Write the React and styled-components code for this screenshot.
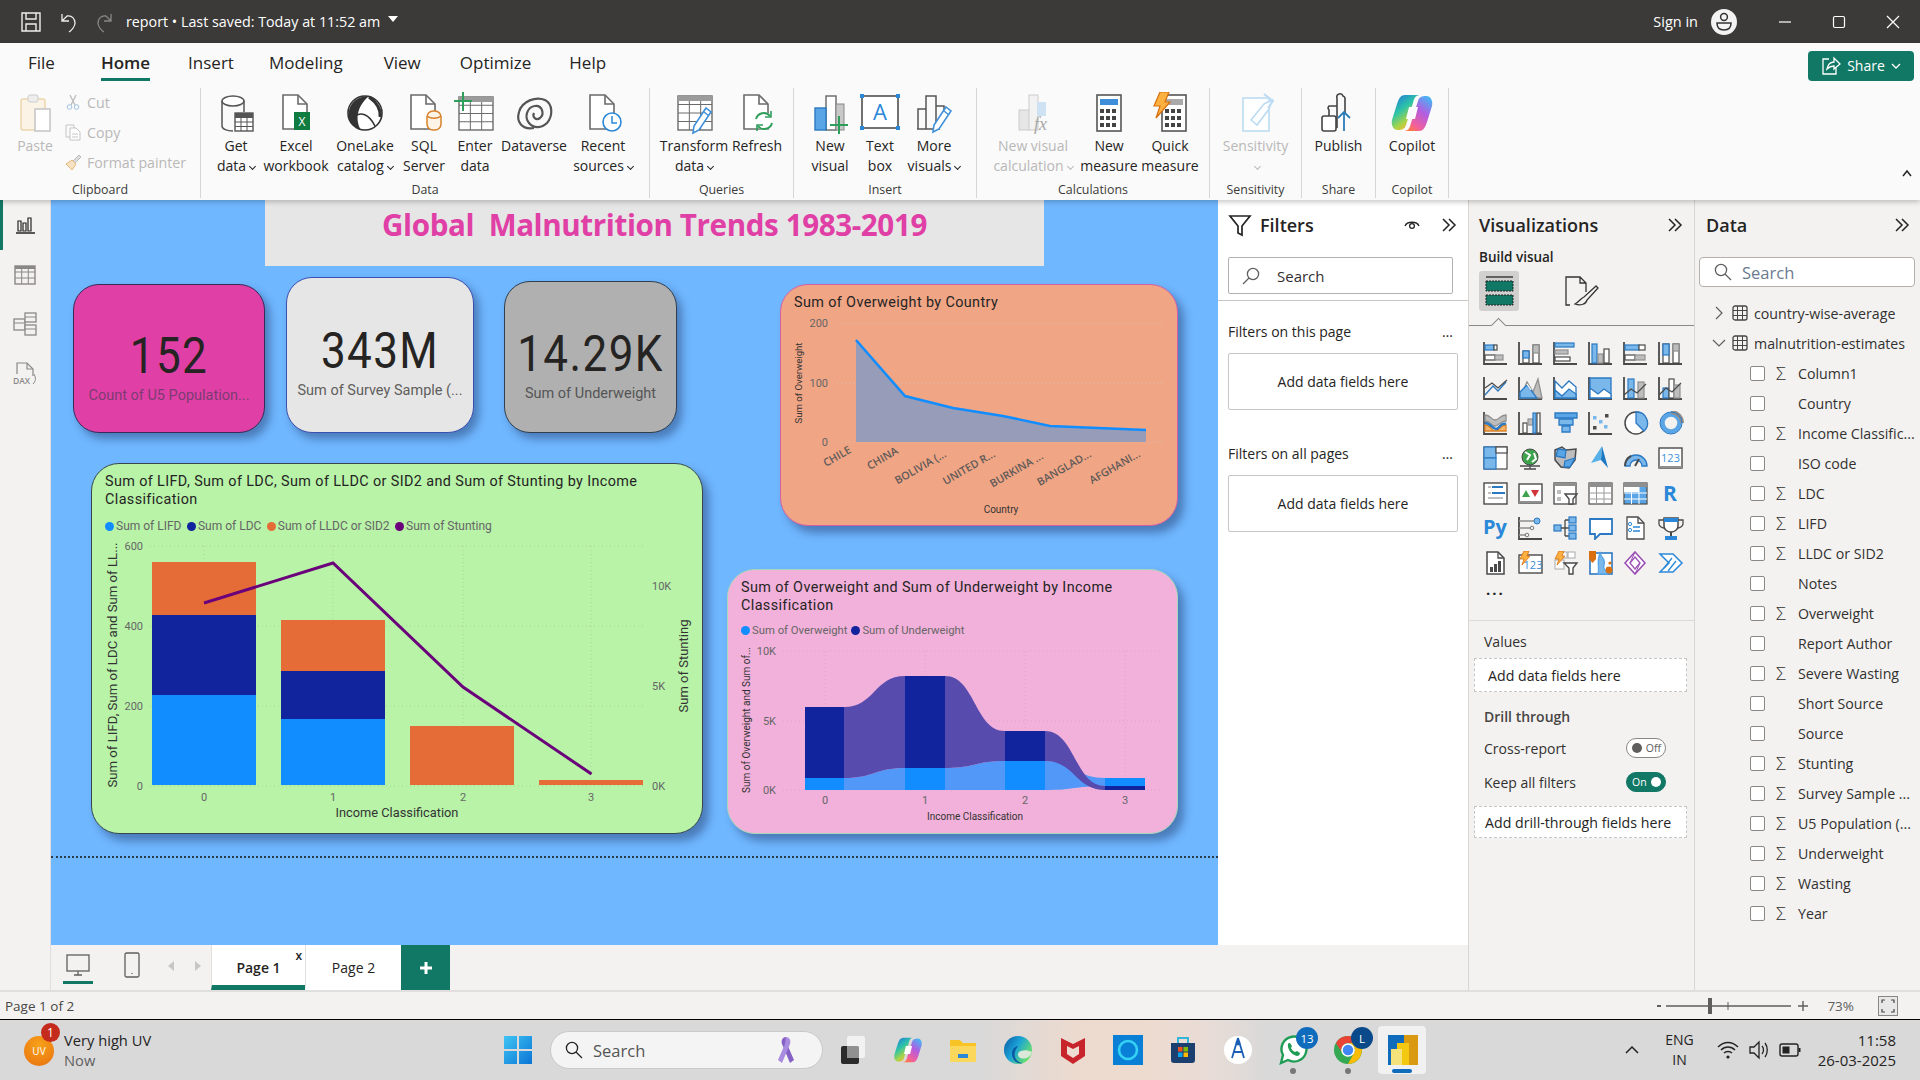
import React from "react";
import styled, { createGlobalStyle } from "styled-components";

const ui = `"Open Sans", "Liberation Sans", sans-serif`;
const din = `Roboto, "Liberation Sans", sans-serif`;
const teal = "#117865";
const panel = "#f3f2f1";

const Global = createGlobalStyle`
  html, body { margin: 0; padding: 0; background: ${panel}; }
  body { font-family: ${ui}; color: #252423; overflow: hidden; }
  * { box-sizing: border-box; }
  svg { display: block; flex-shrink: 0; }
`;

const Page = styled.div`
  width: 1920px;
  height: 1080px;
  display: flex;
  flex-direction: column;
  overflow: hidden;
`;

/* title bar */
const TitleBar = styled.div`
  height: 43px;
  background: #3b3a39;
  color: #fff;
  display: flex;
  align-items: center;
  padding-left: 19px;
  font-size: 14.3px;
`;
const TitleIcon = styled.div`
  width: 37px;
  display: flex;
  justify-content: flex-start;
  padding-left: 1px;
`;
const DocName = styled.span`
  margin-left: -4px;
  white-space: nowrap;
`;
const Caret = styled.span`
  margin-left: 8px;
  width: 0;
  height: 0;
  border-left: 5px solid transparent;
  border-right: 5px solid transparent;
  border-top: 6px solid #fff;
  margin-top: -5px;
`;
const SignIn = styled.span`
  margin-left: auto;
  font-size: 14.5px;
  margin-right: 13px;
`;
const WinButton = styled.div`
  width: 54px;
  display: flex;
  justify-content: center;
  margin-left: ${(p) => p.$ml || 0}px;
`;

/* ribbon */
const Ribbon = styled.div`
  height: 157px;
  background: #fafafa;
  box-shadow: 0 2px 5px rgba(0, 0, 0, 0.22);
  position: relative;
  z-index: 3;
`;
const TabRow = styled.div`
  height: 45px;
  display: flex;
  align-items: center;
  padding-left: 28px;
  padding-right: 6px;
  gap: 38px;
`;
const Tab = styled.div`
  font-size: 17px;
  height: 45px;
  line-height: 40px;
  position: relative;
  font-weight: ${(p) => (p.$active ? 600 : 400)};
  margin-right: ${(p) => p.$mr || 0}px;
  ${(p) =>
    p.$active &&
    `&::after { content: ""; position: absolute; left: 0; right: 0; bottom: 7px; height: 3px; background: ${teal}; }`}
`;
const ShareButton = styled.div`
  margin-left: auto;
  width: 106px;
  height: 30px;
  background: ${teal};
  color: #fff;
  border-radius: 4px;
  display: flex;
  align-items: center;
  justify-content: center;
  gap: 6px;
  font-size: 14px;
`;
const Groups = styled.div`
  display: flex;
  height: 112px;
`;
const Group = styled.div`
  width: ${(p) => p.$w}px;
  height: 110px;
  border-right: 1px solid #d6d6d6;
  display: flex;
  flex-direction: column;
`;
const Items = styled.div`
  height: 93px;
  display: flex;
  justify-content: ${(p) => (p.$center ? "center" : "flex-start")};
  padding-left: ${(p) => p.$pl || 0}px;
`;
const GroupLabel = styled.div`
  margin-top: 3px;
  font-size: 12.4px;
  text-align: center;
  line-height: 16px;
  color: #3b3a39;
`;
const Item = styled.div`
  width: ${(p) => p.$w}px;
  flex-shrink: 0;
  padding-top: 4px;
  display: flex;
  flex-direction: column;
  align-items: center;
  color: ${(p) => (p.$off ? "#b9b8b7" : "#252423")};
`;
const ItemLabel = styled.div`
  font-size: 14px;
  line-height: 20px;
  text-align: center;
  white-space: nowrap;
`;
const Chevron = styled.span`
  display: inline-block;
  width: 5px;
  height: 5px;
  margin-left: 4px;
  border-right: 1.3px solid currentColor;
  border-bottom: 1.3px solid currentColor;
  transform: translateY(-2px) rotate(45deg);
`;
const SmallStack = styled.div`
  display: flex;
  flex-direction: column;
  margin: -1px 0 0 7px;
  color: #b9b8b7;
  font-size: 14.2px;
`;
const SmallRow = styled.div`
  height: 30px;
  display: flex;
  align-items: center;
  gap: 5px;
  white-space: nowrap;
`;
const Collapse = styled.div`
  margin: 80px 0 0 auto;
  padding-right: 7px;
`;

/* body */
const Main = styled.div`
  height: 790px;
  display: flex;
`;
const Rail = styled.div`
  width: 51px;
  background: ${panel};
  border-right: 1px solid #e1dfdd;
  display: flex;
  flex-direction: column;
  align-items: center;
  padding-top: 11px;
  gap: 21.5px;
  position: relative;
`;
const RailMark = styled.div`
  position: absolute;
  left: 0;
  top: 0;
  width: 3px;
  height: 50px;
  background: ${teal};
`;
const Center = styled.div`
  width: 1417px;
  display: flex;
  flex-direction: column;
`;
const CanvasRow = styled.div`
  height: 745px;
  display: flex;
`;
const Canvas = styled.div`
  width: 1167px;
  background: #6fb7ff;
  position: relative;
  overflow: hidden;
`;
const TitleBox = styled.div`
  position: absolute;
  left: 214px;
  top: 0;
  width: 779px;
  height: 66px;
  background: #e6e6e6;
  color: #e040a5;
  font-size: 29.6px;
  font-weight: 700;
  text-align: center;
  line-height: 50px;
  font-family: ${ui};
  letter-spacing: -0.4px;
`;
const Kpi = styled.div`
  position: absolute;
  left: ${(p) => p.$x}px;
  top: ${(p) => p.$y}px;
  width: ${(p) => p.$w}px;
  height: ${(p) => p.$h}px;
  background: ${(p) => p.$bg};
  border: 1px solid ${(p) => p.$line};
  border-radius: 26px;
  box-shadow: 5px 6px 8px rgba(30, 50, 100, 0.45);
  padding-top: ${(p) => p.$top}px;
  text-align: center;
  font-family: ${din};
`;
const KpiValue = styled.div`
  font-size: 50px;
  line-height: 50px;
  color: #252423;
  letter-spacing: 1.6px;
  transform: scaleX(0.88);
`;
const KpiLabel = styled.div`
  margin-top: 5px;
  font-size: 14.5px;
  line-height: 20px;
  color: ${(p) => p.$c};
`;
const Visual = styled.div`
  position: absolute;
  left: ${(p) => p.$x}px;
  top: ${(p) => p.$y}px;
  width: ${(p) => p.$w}px;
  height: ${(p) => p.$h}px;
  background: ${(p) => p.$bg};
  border: 1px solid ${(p) => p.$line};
  border-radius: 28px;
  box-shadow: 6px 7px 9px rgba(30, 50, 100, 0.45);
  font-family: ${din};
`;
const Head = styled.div`
  height: ${(p) => p.$h}px;
  padding: 9px 10px 0 ${(p) => p.$pl}px;
`;
const VisualTitle = styled.div`
  font-size: 14.4px;
  line-height: 17.5px;
  color: #252423;
  letter-spacing: 0.38px;
`;
const Legend = styled.div`
  display: flex;
  align-items: center;
  margin-top: ${(p) => p.$mt}px;
  gap: ${(p) => p.$gap}px;
  height: 16px;
  font-size: ${(p) => p.$s}px;
  color: #666;
`;
const LegendItem = styled.div`
  display: flex;
  align-items: center;
  gap: 2px;
  white-space: nowrap;
  &::before {
    content: "";
    width: 9px;
    height: 9px;
    border-radius: 50%;
    background: ${(p) => p.$c};
  }
`;
const Dotted = styled.div`
  position: absolute;
  left: 0;
  right: 0;
  top: 656px;
  border-top: 2px dotted #2a3a4a;
`;
const ChartText = styled.text`
  font-family: ${(p) => (p.$ui ? ui : din)};
  font-size: ${(p) => p.$s || 11}px;
  fill: ${(p) => p.$c || "#666"};
  font-weight: ${(p) => p.$b || 400};
`;

/* filters */
const Filters = styled.div`
  width: 250px;
  background: #fff;
  padding: 13px 10px 0;
  position: relative;
`;
const PanelHead = styled.div`
  height: 24px;
  display: flex;
  align-items: center;
  font-size: 18px;
  font-weight: 600;
  line-height: 24px;
`;
const VizHead = styled(PanelHead)`
  justify-content: space-between;
`;
const FiltersHeadIcon = styled.div`
  margin-left: ${(p) => p.$ml || 0}px;
`;
const SearchBox = styled.div`
  height: ${(p) => p.$h}px;
  width: ${(p) => p.$w}px;
  margin-top: ${(p) => p.$mt}px;
  background: #fff;
  border: 1px solid #b3b0ad;
  border-radius: ${(p) => p.$r || 2}px;
  display: flex;
  align-items: center;
  gap: ${(p) => p.$gap}px;
  padding-left: ${(p) => p.$pl}px;
  font-size: ${(p) => p.$s || 15}px;
  color: ${(p) => p.$c || "#323130"};
`;
const FilterRule = styled.div`
  height: 1px;
  background: #c8c6c4;
  margin: 6px -10px 0;
`;
const FilterTitle = styled.div`
  margin-top: ${(p) => p.$mt}px;
  height: 20px;
  font-size: 14px;
  line-height: 20px;
  display: flex;
  justify-content: space-between;
  padding-right: 5px;
`;
const DropBox = styled.div`
  margin-top: 11px;
  height: 57px;
  border: 1px solid #c8c6c4;
  border-radius: 2px;
  display: flex;
  align-items: center;
  justify-content: center;
  font-size: 14px;
`;

/* page bar */
const PageBar = styled.div`
  height: 45px;
  background: ${panel};
  display: flex;
  align-items: stretch;
  padding-left: 12px;
`;
const ViewIcon = styled.div`
  width: ${(p) => p.$w}px;
  margin-left: ${(p) => p.$ml || 0}px;
  display: flex;
  justify-content: center;
  padding-top: 7px;
  position: relative;
  ${(p) =>
    p.$active &&
    `&::after { content: ""; position: absolute; left: 0; right: 0; bottom: 6px; height: 3px; background: ${teal}; }`}
`;
const NavArrow = styled.div`
  width: 27px;
  display: flex;
  justify-content: center;
  align-items: center;
  padding-bottom: 4px;
`;
const PageTab = styled.div`
  width: ${(p) => p.$w}px;
  background: #fff;
  border-bottom: 5px solid ${(p) => (p.$active ? teal : "#fff")};
  border-left: 1px solid #e1dfdd;
  display: flex;
  align-items: center;
  justify-content: center;
  font-size: 14px;
  font-weight: ${(p) => (p.$active ? 600 : 400)};
  position: relative;
  padding-top: 4px;
`;
const CloseX = styled.span`
  position: absolute;
  right: 3px;
  top: 2px;
  font-size: 12px;
  font-weight: 600;
`;
const AddTab = styled.div`
  width: 49px;
  background: ${teal};
  display: flex;
  align-items: center;
  justify-content: center;
`;

/* visualizations */
const Viz = styled.div`
  width: 226px;
  background: ${panel};
  border-left: 1px solid #d8d6d4;
  padding-top: 13px;
`;
const VizPad = styled.div`
  padding: 0 10px;
`;
const BuildLabel = styled.div`
  margin-top: 10px;
  font-size: 13.5px;
  font-weight: 600;
  line-height: 20px;
`;
const BuildTabs = styled.div`
  margin: 4px -10px 0;
  height: 55px;
  border-bottom: 1px solid #8a8886;
  position: relative;
  display: flex;
  gap: 43px;
  padding-left: 10px;
`;
const Notch = styled.div`
  position: absolute;
  left: 24px;
  bottom: -6px;
  width: 11px;
  height: 11px;
  background: ${panel};
  border-left: 1px solid #8a8886;
  border-top: 1px solid #8a8886;
  transform: rotate(45deg);
`;
const BuildTab = styled.div`
  width: 40px;
  height: 40px;
  border-radius: 3px;
  background: ${(p) => (p.$active ? "#d2d0ce" : "transparent")};
  display: flex;
  align-items: center;
  justify-content: center;
`;
const Gallery = styled.div`
  margin-top: 9px;
  padding-left: 9px;
  display: grid;
  grid-template-columns: repeat(6, 35px);
  grid-auto-rows: 35px;
  place-items: center;
`;
const More = styled.div`
  padding-left: 17px;
  font-size: 15px;
  font-weight: 700;
  letter-spacing: 2px;
  line-height: 20px;
  margin-top: -1px;
`;
const VizRule = styled.div`
  height: 1px;
  background: #dcdad8;
  margin-top: 21px;
`;
const WellLabel = styled.div`
  margin: ${(p) => p.$mt}px 0 0 15px;
  font-size: 14px;
  line-height: 20px;
  font-weight: ${(p) => p.$b || 400};
  color: ${(p) => (p.$b ? "#484644" : "#323130")};
`;
const Well = styled.div`
  margin: ${(p) => p.$mt}px 0 0 5px;
  width: 213px;
  height: ${(p) => p.$h}px;
  background: #fff;
  border: 1px dashed #c8c6c4;
  display: flex;
  align-items: center;
  padding-left: ${(p) => p.$pl}px;
  font-size: 14.2px;
  white-space: nowrap;
`;
const ToggleRow = styled.div`
  margin-top: ${(p) => p.$mt}px;
  padding: 0 28px 0 15px;
  height: 20px;
  display: flex;
  justify-content: space-between;
  align-items: center;
  font-size: 14px;
  color: #323130;
`;
const Toggle = styled.div`
  width: 40px;
  height: 20px;
  border-radius: 10px;
  border: 1px solid ${(p) => (p.$on ? teal : "#8a8886")};
  background: ${(p) => (p.$on ? teal : "#fff")};
  color: ${(p) => (p.$on ? "#fff" : "#605e5c")};
  display: flex;
  align-items: center;
  justify-content: space-between;
  flex-direction: ${(p) => (p.$on ? "row-reverse" : "row")};
  padding: 0 4px 0 5px;
  font-size: 10.5px;
  &::before {
    content: "";
    width: 10px;
    height: 10px;
    border-radius: 50%;
    background: ${(p) => (p.$on ? "#fff" : "#605e5c")};
  }
`;

/* data */
const DataPanel = styled.div`
  width: 226px;
  background: ${panel};
  border-left: 1px solid #d8d6d4;
  padding-top: 13px;
`;
const DataHead = styled(PanelHead)`
  padding: 0 9px 0 11px;
  justify-content: space-between;
`;
const DataSearch = styled.div`
  padding-left: 4px;
`;
const Tree = styled.div`
  margin-top: 11px;
`;
const TableRow = styled.div`
  height: 30px;
  display: flex;
  align-items: center;
  padding-left: 17px;
  font-size: 14.2px;
  color: #323130;
  gap: 6px;
`;
const FieldRow = styled.div`
  height: 30px;
  display: flex;
  align-items: center;
  padding-left: 55px;
  font-size: 14.2px;
  color: #323130;
  white-space: nowrap;
`;
const Check = styled.div`
  width: 15px;
  height: 15px;
  background: #fff;
  border: 1px solid #8a8886;
  border-radius: 2px;
  margin-right: 11px;
`;
const Sigma = styled.span`
  width: 22px;
  font-size: 18px;
  line-height: 16px;
  font-weight: 300;
  text-align: left;
`;

/* status */
const StatusBar = styled.div`
  height: 29px;
  background: ${panel};
  border-top: 2px solid #e1dfdd;
  border-bottom: 0;
  display: flex;
  align-items: center;
  padding-left: 5px;
  font-size: 13.5px;
  color: #484644;
`;
const ZoomBar = styled.div`
  margin-left: auto;
  display: flex;
  align-items: center;
  padding-right: 22px;
`;
const ZoomPct = styled.span`
  margin: 0 24px 0 18px;
  color: #605e5c;
`;

/* taskbar */
const Taskbar = styled.div`
  height: 61px;
  border-top: 1px solid #000;
  background: linear-gradient(90deg, #d9d9d9 0, #d9d9d9 51%, #ecdacf 56%, #eddbd0 60%, #e8dcd6 63%, #d9d9d9 66%);
  display: flex;
  align-items: center;
  position: relative;
`;
const Weather = styled.div`
  width: 503px;
  height: 60px;
  display: flex;
  align-items: center;
  padding-left: 24px;
  gap: 10px;
  flex-shrink: 0;
`;
const WeatherIcon = styled.div`
  width: 30px;
  height: 30px;
  border-radius: 50%;
  background: radial-gradient(circle at 50% 30%, #f7a11a, #e8710f);
  color: #fff;
  font-size: 10px;
  display: flex;
  align-items: center;
  justify-content: center;
  position: relative;
  margin-top: 2px;
`;
const RedBadge = styled.div`
  position: absolute;
  right: -6px;
  top: -13px;
  width: 19px;
  height: 19px;
  border-radius: 50%;
  background: #c42b1c;
  color: #fff;
  font-size: 12px;
  display: flex;
  align-items: center;
  justify-content: center;
`;
const WeatherText = styled.div`
  font-size: 14.7px;
  line-height: 20px;
`;
const Muted = styled.div`
  color: #5f5f5f;
`;
const TaskSearch = styled.div`
  margin-left: 17px;
  width: 273px;
  height: 38px;
  border-radius: 19px;
  background: #f4f4f4;
  border: 1px solid #c9c9c9;
  display: flex;
  align-items: center;
  padding: 0 27px 0 14px;
  gap: 10px;
  font-size: 16.5px;
  color: #555;
  flex-shrink: 0;
`;
const SearchRibbon = styled.span`
  margin-left: auto;
`;
const Slot = styled.div`
  width: 55px;
  height: 48px;
  display: flex;
  align-items: center;
  justify-content: center;
  position: relative;
  flex-shrink: 0;
  margin-left: ${(p) => p.$ml || 0}px;
  ${(p) =>
    p.$run &&
    `&::after { content: ""; position: absolute; left: 25px; bottom: 0; width: 6px; height: 6px; border-radius: 50%; background: #777; }`}
  ${(p) =>
    p.$sel &&
    `&::before { content: ""; position: absolute; left: 3px; right: 4px; top: 0; bottom: 0; background: #f1f1f1; border-radius: 4px; }
     &::after { content: ""; position: absolute; left: 17px; bottom: 1px; width: 20px; height: 4px; border-radius: 2px; background: #0f6cbd; }`}
  & > svg { position: relative; z-index: 1; }
`;
const CountBadge = styled.div`
  position: absolute;
  right: ${(p) => p.$r}px;
  top: ${(p) => p.$t}px;
  width: 22px;
  height: 22px;
  border-radius: 50%;
  background: ${(p) => p.$bg};
  color: #fff;
  font-size: 11.5px;
  display: flex;
  align-items: center;
  justify-content: center;
  z-index: 2;
`;
const Tray = styled.div`
  margin-left: auto;
  display: flex;
  align-items: center;
  padding-right: 24px;
`;
const TrayText = styled.div`
  font-size: ${(p) => p.$s || 14}px;
  line-height: 20px;
  text-align: ${(p) => p.$align};
  white-space: nowrap;
  margin: 0 ${(p) => p.$mr || 0}px 0 ${(p) => p.$ml || 0}px;
`;
const TrayIcon = styled.div`
  width: 31px;
  display: flex;
  justify-content: center;
  margin-left: ${(p) => p.$ml || 0}px;
`;

/* ---------- icons ---------- */
const Ico = ({ s = 44, w, h, children }) => (
  <svg width={w || s} height={h || s} viewBox={`0 0 ${w || s} ${h || s}`} fill="none">
    {children}
  </svg>
);

const Doc = ({ c = "#6b6b6b" }) => (
  <>
    <path d="M9 3H24L33 12V37H9Z" fill="#fff" stroke={c} strokeWidth="1.6" />
    <path d="M24 3V12H33" stroke={c} strokeWidth="1.6" />
  </>
);
const Cells = ({ x, y, w, h, c = "#6b6b6b" }) => {
  const lines = [];
  for (let i = 1; i < 3; i++) lines.push(<path key={"v" + i} d={`M${x + (w * i) / 3} ${y}V${y + h}`} stroke={c} />);
  for (let i = 1; i < 4; i++) lines.push(<path key={"h" + i} d={`M${x} ${y + (h * i) / 4}H${x + w}`} stroke={c} />);
  return (
    <>
      <rect x={x} y={y} width={w} height={h} fill="#fff" stroke={c} strokeWidth="1.4" />
      {lines}
    </>
  );
};
const Pen = ({ x = 0, y = 0, c = "#3d8fd9" }) => (
  <g transform={`translate(${x} ${y})`}>
    <path d="M14 2L19 6L7 24L1 27L2 20Z" fill="#fff" stroke={c} strokeWidth="1.6" />
    <path d="M12 6L17 10" stroke={c} strokeWidth="1.4" />
  </g>
);

const PasteIco = () => (
  <Ico>
    <rect x="8" y="7" width="24" height="31" rx="2" fill="#fbf3e6" stroke="#ecd6ad" strokeWidth="1.5" />
    <rect x="15" y="3" width="10" height="7" rx="2" fill="#eee" stroke="#ccc" />
    <rect x="22" y="17" width="15" height="22" fill="#fff" stroke="#c4c4c4" strokeWidth="1.5" />
  </Ico>
);
const GetDataIco = () => (
  <Ico>
    <ellipse cx="19" cy="9" rx="11" ry="5" fill="#fff" stroke="#555" strokeWidth="1.5" />
    <path d="M8 9V34C8 37 13 39 19 39M30 9V20" stroke="#555" strokeWidth="1.5" />
    <Cells x={21} y={21} w={18} h={18} c="#555" />
    <rect x="21" y="21" width="18" height="4" fill="#555" />
  </Ico>
);
const ExcelIco = () => (
  <Ico>
    <Doc />
    <rect x="20" y="20" width="16" height="18" fill="#107c41" />
    <text x="28" y="34" textAnchor="middle" fontSize="12" fontFamily="Open Sans" fill="#fff">X</text>
  </Ico>
);
const OneLakeIco = () => (
  <Ico>
    <circle cx="22" cy="21" r="17" fill="#fff" stroke="#333" strokeWidth="1.6" />
    <path d="M26 4C12 4 4 14 6 26C7 32 12 36 18 38C13 30 12 16 26 4Z" fill="#333" />
    <path d="M10 25C18 19 26 22 32 34" stroke="#333" strokeWidth="1.6" />
    <path d="M26 5C33 10 38 17 37 25" stroke="#333" strokeWidth="3" />
  </Ico>
);
const SqlIco = () => (
  <Ico>
    <Doc />
    <rect x="25" y="19" width="14" height="19" rx="6" fill="#fdf3e6" stroke="#d9822b" strokeWidth="1.5" />
    <path d="M25 24C28 27 36 27 39 24" stroke="#d9822b" strokeWidth="1.5" />
  </Ico>
);
const EnterIco = () => (
  <Ico>
    <Cells x={6} y={5} w={34} h={33} />
    <rect x="6" y="5" width="34" height="5" fill="#9b9b9b" />
    <path d="M10 0V19M1 9H19" stroke="#2e9e5b" strokeWidth="2" />
  </Ico>
);
const DataverseIco = () => (
  <Ico>
    <path d="M22 36C10 38 4 30 7 20C10 9 24 4 33 8C41 12 41 24 35 31C30 36 22 37 17 31C12 25 15 15 23 14C30 13 33 22 28 26C24 29 20 25 22 21" stroke="#555" strokeWidth="2.2" />
  </Ico>
);
const RecentIco = () => (
  <Ico>
    <Doc />
    <circle cx="31" cy="30" r="9" fill="#fff" stroke="#2b88d8" strokeWidth="1.6" />
    <path d="M31 24V31H36" stroke="#2b88d8" strokeWidth="1.5" />
  </Ico>
);
const TransformIco = () => (
  <Ico>
    <Cells x={6} y={4} w={34} h={34} />
    <rect x="6" y="4" width="34" height="5" fill="#9b9b9b" />
    <Pen x="20" y="14" />
  </Ico>
);
const RefreshIco = () => (
  <Ico>
    <Doc />
    <circle cx="29" cy="29" r="9" fill="#fff" stroke="none" />
    <path d="M21 27A8 8 0 0 1 35 24M37 31A8 8 0 0 1 23 34" stroke="#2e9e5b" strokeWidth="2" />
    <path d="M36 19V25H30M22 39V33H28" stroke="#2e9e5b" strokeWidth="1.6" />
  </Ico>
);
const NewVisualIco = () => (
  <Ico>
    <rect x="18" y="4" width="10" height="34" fill="#fff" stroke="#666" strokeWidth="1.4" />
    <rect x="28" y="12" width="8" height="26" fill="#c8c8c8" stroke="#888" />
    <rect x="7" y="16" width="11" height="22" fill="#5aa5e6" stroke="#2b79c2" strokeWidth="1.4" />
    <path d="M31 24V42M22 33H40" stroke="#2e9e5b" strokeWidth="2" />
  </Ico>
);
const TextBoxIco = () => (
  <Ico>
    <rect x="4" y="4" width="36" height="32" fill="#fff" stroke="#444" strokeWidth="1.5" />
    {[[4, 4], [40, 4], [4, 36], [40, 36]].map(([x, y]) => (
      <rect key={x + "" + y} x={x - 2} y={y - 2} width="4" height="4" fill="#2b88d8" />
    ))}
    <text x="22" y="28" textAnchor="middle" fontSize="22" fontFamily="Open Sans" fill="#2b88d8">A</text>
  </Ico>
);
const MoreVisualsIco = () => (
  <Ico>
    <path d="M6 37V17H14V37M14 37V4H24V37M24 37V14H32V24" stroke="#555" strokeWidth="1.5" />
    <path d="M5 37H28" stroke="#555" strokeWidth="1.5" />
    <Pen x="20" y="13" />
  </Ico>
);
const CalcVisualIco = () => (
  <Ico>
    <rect x="8" y="18" width="11" height="20" fill="#e6e6e6" stroke="#ccc" />
    <rect x="18" y="3" width="9" height="35" fill="#f2f2f2" stroke="#ccc" />
    <rect x="26" y="10" width="9" height="14" fill="#cfe2f3" />
    <text x="23" y="38" fontSize="18" fontStyle="italic" fontFamily="Liberation Serif" fill="#a8a8a8">fx</text>
  </Ico>
);
const CalcBody = ({ top = "#3d8fd9", x = 10 }) => (
  <>
    <rect x={x} y="3" width="24" height="36" fill="#fff" stroke="#555" strokeWidth="1.6" />
    <rect x={x + 3} y="7" width="18" height="6" fill={top} />
    {[17, 24, 31].map((y) =>
      [3, 9, 15].map((dx) => <rect key={y + "-" + dx} x={x + dx} y={y} width="4" height="4" fill="#444" />)
    )}
  </>
);
const MeasureIco = () => (
  <Ico>
    <CalcBody />
  </Ico>
);
const QuickIco = () => (
  <Ico>
    <CalcBody x={14} top="#aaa" />
    <path d="M12 0H21L17 10H22L8 26L12 14H6Z" fill="#fbb040" stroke="#d9700f" strokeWidth="1.2" />
  </Ico>
);
const SensitivityIco = () => (
  <Ico>
    <rect x="9" y="6" width="26" height="33" fill="#fff" stroke="#bcdcf3" strokeWidth="1.6" />
    <path d="M17 28L30 12L38 8L35 17L23 33Z" fill="#fff" stroke="#bcdcf3" strokeWidth="1.6" />
    <path d="M30 2L39 9L34 16" stroke="#bcdcf3" strokeWidth="2" />
  </Ico>
);
const PublishIco = () => (
  <Ico>
    <path d="M20 36V6A3 3 0 0 1 26 4A3 3 0 0 1 28 6V22M20 14H12A3 3 0 0 0 12 18V36" stroke="#444" strokeWidth="1.6" />
    <rect x="5" y="24" width="14" height="15" rx="2" fill="#fff" stroke="#444" strokeWidth="1.6" />
    <path d="M27 39V20M21 26L27 20L33 26" stroke="#2b7cb8" strokeWidth="1.8" />
  </Ico>
);
const CopilotGrad = ({ id }) => (
  <defs>
    <linearGradient id={id + "a"} x1="0" y1="0" x2="0.6" y2="1">
      <stop offset="0" stopColor="#1f6fe0" />
      <stop offset="0.45" stopColor="#2cc3a8" />
      <stop offset="0.75" stopColor="#a6d44a" />
      <stop offset="1" stopColor="#ffb52e" />
    </linearGradient>
    <linearGradient id={id + "b"} x1="0.8" y1="0" x2="0.2" y2="1">
      <stop offset="0" stopColor="#47b4f5" />
      <stop offset="0.4" stopColor="#b25de0" />
      <stop offset="0.8" stopColor="#f2609a" />
      <stop offset="1" stopColor="#ff7a3d" />
    </linearGradient>
  </defs>
);
const CopilotShape = ({ id }) => (
  <>
    <CopilotGrad id={id} />
    <path d="M15 3H30C25 3 24 7 23 11L16 33C15 37 12 38 8 38C3 38 1 33 2 28L7 12C9 6 11 3 15 3Z" fill={`url(#${id}a)`} />
    <path d="M29 39H14C19 39 20 35 21 31L28 9C29 5 32 4 36 4C41 4 43 9 42 14L37 30C35 36 33 39 29 39Z" fill={`url(#${id}b)`} />
    <path d="M19 15H28L25 27H16Z" fill="#fff" />
  </>
);
const CopilotIco = () => (
  <Ico>
    <CopilotShape id="cpa" />
  </Ico>
);

const SmallCut = () => (
  <Ico s={18}>
    <path d="M6 2L11 12M12 2L7 12" stroke="#bbb" strokeWidth="1.3" />
    <circle cx="5.5" cy="14" r="2.3" stroke="#9fc3e6" />
    <circle cx="12.5" cy="14" r="2.3" stroke="#9fc3e6" />
  </Ico>
);
const SmallCopy = () => (
  <Ico s={18}>
    <path d="M2 2H10V5M2 2V14H6" stroke="#c4c4c4" />
    <path d="M6 5H12L16 9V17H6Z" fill="#fff" stroke="#c4c4c4" />
    <path d="M8 11H14M8 14H14" stroke="#c4c4c4" />
  </Ico>
);
const SmallBrush = () => (
  <Ico s={18}>
    <path d="M9 8L15 2L17 4L11 10Z" fill="#ddd" stroke="#bbb" />
    <path d="M8 7L12 11L8 17L2 11Z" fill="#f6e2c2" stroke="#e6b97c" />
  </Ico>
);

const Chevrons = ({ c = "#252423" }) => (
  <Ico w={18} h={16}>
    <path d="M3 2L9 8L3 14M9 2L15 8L9 14" stroke={c} strokeWidth="1.5" />
  </Ico>
);
const Magnifier = ({ flip, c = "#605e5c" }) => (
  <Ico s={18}>
    {flip ? (
      <>
        <circle cx="11" cy="7" r="5.6" stroke={c} strokeWidth="1.3" />
        <path d="M7 11L1 17" stroke={c} strokeWidth="1.3" />
      </>
    ) : (
      <>
        <circle cx="7" cy="7" r="5.6" stroke={c} strokeWidth="1.3" />
        <path d="M11 11L17 17" stroke={c} strokeWidth="1.3" />
      </>
    )}
  </Ico>
);
const TableGlyph = () => (
  <Ico s={16}>
    <rect x="1" y="1" width="14" height="14" rx="2" stroke="#484644" strokeWidth="1.3" />
    <path d="M5.5 1V15M10.5 1V15M1 5.5H15M1 10.5H15" stroke="#484644" />
  </Ico>
);
const TreeChevron = ({ open }) => (
  <Ico s={14}>
    <path d={open ? "M1 4L7 10L13 4" : "M4 1L10 7L4 13"} stroke="#605e5c" strokeWidth="1.2" />
  </Ico>
);

/* visualization gallery */
const D = "#4a4a4a";
const fills = {
  b: ["#7ab8ec", "#2b79c2"],
  g: ["#bdbdbd", "#8f8f8f"],
  w: ["#fff", "#4a4a4a"],
};
const r = (x, y, w, h, c = "b") => (
  <rect x={x} y={y} width={w} height={h} fill={fills[c][0]} stroke={fills[c][1]} strokeWidth="1.2" />
);
const Ax = () => <path d="M1 1V23H24" stroke={D} strokeWidth="1.8" />;
const Ln = ({ d, c = D, w = 1.3, f = "none" }) => <path d={d} stroke={c} strokeWidth={w} fill={f} />;

const vizIcons = [
  <><Ax />{r(2, 4, 9, 5)}{r(11, 4, 3, 5, "w")}{r(2, 14, 10, 5, "w")}{r(12, 14, 8, 5, "g")}</>,
  <><Ax />{r(5, 10, 6, 12, "w")}{r(5, 10, 6, 7)}{r(15, 4, 6, 18, "w")}{r(15, 4, 6, 8, "g")}</>,
  <><Ax />{r(2, 2, 19, 4)}{r(2, 9, 13, 4, "g")}{r(2, 16, 15, 4, "w")}</>,
  <><Ax />{r(4, 3, 5, 19)}{r(10, 13, 5, 9, "g")}{r(16, 8, 5, 14, "w")}</>,
  <><Ax />{r(2, 4, 14, 5)}{r(16, 4, 6, 5, "w")}{r(2, 14, 10, 5, "w")}{r(12, 14, 10, 5, "g")}</>,
  <><Ax />{r(5, 3, 6, 19, "w")}{r(5, 3, 6, 11)}{r(15, 3, 6, 19, "w")}{r(15, 3, 6, 7, "g")}</>,

  <><Ax /><Ln d="M2 19L10 10L15 15L23 6" c="#2b79c2" /><Ln d="M2 12L9 7L15 12L24 4" /></>,
  <><Ax /><Ln d="M2 22L9 6L15 16L20 3L24 22Z" c="#8f8f8f" f="#bdbdbd" /><Ln d="M2 22V16L9 9L19 22Z" c="#2b79c2" f="#7ab8ec" /><Ln d="M9 8L13 14" c="#fff" /></>,
  <><Ax /><Ln d="M2 5L9 12L16 5L23 11V22H2Z" c="#2b79c2" f="#fff" /><Ln d="M2 14L9 20L16 13L23 18V22H2Z" c="#2b79c2" f="#7ab8ec" /></>,
  <><Ax /><Ln d="M2 2H23V22H2Z" c="#2b79c2" f="#7ab8ec" /><Ln d="M2 12L10 18L16 13L23 18V22H2Z" c="#2b79c2" f="#fff" /></>,
  <><Ax />{r(5, 3, 6, 19)}{r(15, 6, 6, 16, "g")}<Ln d="M1 19L8 13L14 17L23 8" /></>,
  <><Ax />{r(5, 12, 6, 10)}{r(11, 3, 5, 19, "w")}{r(16, 9, 6, 13, "g")}<Ln d="M1 19L8 12L14 16L23 7" /></>,

  <><Ax /><Ln d="M2 4C8 4 8 9 12 9S17 4 23 4V10C17 10 16 15 12 15S8 10 2 10Z" c="#8f8f8f" f="#bdbdbd" /><Ln d="M2 14C8 14 8 20 12 20S17 14 23 14V20H2Z" c="#d9822b" f="#f5b46a" /><Ln d="M2 12C8 12 9 18 13 18S17 11 23 13" c="#2b79c2" w="2.6" /></>,
  <><Ax />{r(5, 12, 4, 10, "w")}{r(10, 8, 5, 6, "g")}{r(15, 2, 3, 20)}{r(19, 2, 3, 20, "w")}</>,
  <><Ln d="M2 2H24V7H2Z" c="#2b79c2" f="#5aa5e6" /><Ln d="M6 8H20V14H6Z" c="#2b79c2" f="#7ab8ec" /><Ln d="M9 15H17V21H9Z" c="#2b79c2" f="#7ab8ec" /></>,
  <><Ax /><rect x="5" y="5" width="3.5" height="3.5" fill="#7ab8ec" /><rect x="11" y="9" width="3.5" height="3.5" fill="#7ab8ec" /><rect x="17" y="3" width="3.5" height="3.5" fill={D} /><rect x="5" y="15" width="3.5" height="3.5" fill={D} /><rect x="16" y="14" width="3.5" height="3.5" fill="#7ab8ec" /></>,
  <><circle cx="13" cy="12" r="11" fill="#fff" stroke={D} strokeWidth="1.5" /><Ln d="M13 1A11 11 0 0 1 21 20L13 12Z" c="#2b79c2" f="#7ab8ec" /></>,
  <><circle cx="13" cy="12" r="8.5" stroke="#5aa5e6" strokeWidth="4.5" /><Ln d="M13 1A11 11 0 0 1 24 12" c="#8f8f8f" w="4" /><circle cx="13" cy="12" r="11" stroke="#2b79c2" /></>,

  <><rect x="1" y="1" width="23" height="22" fill="#fff" stroke={D} strokeWidth="1.2" />{r(1, 1, 12, 11)}{r(1, 12, 12, 11)}{r(13, 1, 11, 6, "w")}</>,
  <><circle cx="12" cy="11" r="8" fill="#3fa34d" stroke={D} /><Ln d="M7 6L12 9L9 14M16 7L18 13L14 16" c="#fff" w="2" /><Ln d="M2 20H22M12 19V23M6 23H18" /></>,
  <><Ln d="M2 4L9 1L13 4L23 3L22 14L16 22L8 21L2 14Z" c={D} f="#bdbdbd" w="1.5" /><Ln d="M5 3L13 4L12 12L3 10Z" c="#2b79c2" f="#5aa5e6" /><Ln d="M12 15L22 12L17 21L11 21Z" c="#2b79c2" f="#5aa5e6" /></>,
  <><Ln d="M14 0L3 17L13 14Z" c="none" f="#58b0e8" /><Ln d="M14 0L13 14L20 22Z" c="none" f="#1c78c0" /></>,
  <><Ln d="M2 20A11 11 0 0 1 24 20H19A6 6 0 0 0 7 20Z" c="#2b79c2" f="#7ab8ec" /><Ln d="M2 20A11 11 0 0 1 8 10" c={D} w="2" /><Ln d="M12 20L16 13" c={D} w="2" /></>,
  <><rect x="1" y="2" width="23" height="20" fill="#fff" stroke={D} strokeWidth="1.4" /><rect x="1" y="20" width="23" height="2" fill="#8f8f8f" /><text x="12.5" y="15.5" textAnchor="middle" fontSize="11" fontFamily="Open Sans" fill="#3d8fd9">123</text></>,

  <><rect x="1" y="2" width="23" height="21" fill="#fff" stroke={D} strokeWidth="1.4" /><Ln d="M9 6H20M9 12H22" c="#2b79c2" w="2" /><Ln d="M5 6H8M5 12H8M5 17H20" c="#aaa" w="1.5" /></>,
  <><rect x="1" y="3" width="23" height="19" fill="#fff" stroke={D} strokeWidth="1.4" /><Ln d="M4 16L8 9L12 16Z" c="none" f="#3fa34d" /><Ln d="M13 9H21L17 16Z" c="none" f="#d13438" /><rect x="1" y="20" width="23" height="2" fill="#8f8f8f" /></>,
  <><rect x="1" y="2" width="22" height="21" fill="#fff" stroke={D} strokeWidth="1.3" /><rect x="1" y="2" width="22" height="3" fill="#8f8f8f" /><rect x="4" y="9" width="4" height="4" fill="#bdbdbd" /><rect x="4" y="16" width="4" height="4" fill="#bdbdbd" /><Ln d="M12 13H24L20 18V23H16V18Z" c={D} f="#fff" w="1.4" /></>,
  <><rect x="1" y="2" width="23" height="21" fill="#fff" stroke={D} strokeWidth="1.2" /><rect x="1" y="2" width="23" height="4" fill="#8f8f8f" /><Ln d="M8.5 6V23M16 6V23M1 12H24M1 18H24" c="#9a9a9a" w="1" /></>,
  <><rect x="1" y="2" width="23" height="21" fill="#5aa5e6" stroke={D} strokeWidth="1.2" /><rect x="1" y="2" width="23" height="4" fill="#8f8f8f" /><rect x="1" y="6" width="15" height="5" fill="#fff" /><Ln d="M8.5 6V23M16 6V23M1 12H24M1 18H24" c="#fff" w="1" /></>,
  <text x="12" y="20" textAnchor="middle" fontSize="21" fontWeight="700" fontFamily="Open Sans" fill="#2b88d8">R</text>,

  <text x="12" y="18" textAnchor="middle" fontSize="20" fontWeight="700" fontFamily="Open Sans" fill="#2b88d8">Py</text>,
  <><Ax /><Ln d="M1 5H16M1 12H13M1 19H8" c="#8f8f8f" w="1.3" /><circle cx="19" cy="5" r="3" fill="#7ab8ec" stroke="#2b79c2" /><circle cx="14" cy="12" r="1.8" stroke="#777" /><circle cx="9" cy="19" r="1.8" stroke="#777" /></>,
  <>{r(1, 9, 7, 6)}<Ln d="M8 12H12M12 4V20M12 4H16M12 12H16M12 20H16" c={D} />{r(16, 1, 7, 6)}{r(16, 9, 7, 6)}{r(16, 17, 7, 6)}</>,
  <Ln d="M2 3H24V18H12L7 23V18H2Z" c="#2b79c2" f="#fff" w="1.8" />,
  <><Ln d="M4 1H15L21 7V23H4Z" c={D} f="#fff" /><Ln d="M15 1V7H21" c={D} /><Ln d="M10 11H17M10 15H17" c="#2b88d8" w="1.6" /><circle cx="7" cy="8" r="1.6" stroke="#2b88d8" /><circle cx="7" cy="14" r="1.6" stroke="#2b88d8" /></>,
  <><Ln d="M6 2H20V10C20 14 16 16 13 16S6 14 6 10Z" c={D} f="#fff" w="1.5" /><rect x="6" y="2" width="14" height="4" fill="#2b88d8" /><Ln d="M6 4H1V8C1 10 4 12 6 12M20 4H25V8C25 10 22 12 20 12" c={D} /><rect x="7" y="20" width="12" height="4" fill="#2b88d8" /><Ln d="M13 16V20" c={D} w="2" /></>,

  <><Ln d="M4 1H15L21 7V23H4Z" c={D} f="#fff" w="1.5" /><Ln d="M15 1V7H21" c={D} /><rect x="7" y="16" width="3" height="5" fill={D} /><rect x="11" y="13" width="3" height="8" fill={D} /><rect x="15" y="10" width="3" height="11" fill={D} /></>,
  <><rect x="1" y="4" width="23" height="18" fill="#fff" stroke={D} strokeWidth="1.4" /><text x="15" y="18" textAnchor="middle" fontSize="11" fontFamily="Open Sans" fill="#3d8fd9">123</text><Ln d="M6 0H11L9 5H12L4 14L6 8H2Z" c="#d9700f" f="#fbb040" w="0.8" /></>,
  <><rect x="8" y="1" width="6" height="6" fill="#fff" stroke="#aaa" /><rect x="15" y="1" width="7" height="6" fill="#fff" stroke="#aaa" /><rect x="2" y="9" width="9" height="9" fill="#fff" stroke="#aaa" /><Ln d="M11 12H24L20 17V23H16V17Z" c={D} f="#fff" w="1.4" /><Ln d="M6 0H11L9 5H12L4 14L6 8H2Z" c="#d9700f" f="#fbb040" w="0.8" /></>,
  <><rect x="2" y="2" width="22" height="21" fill="#fff" stroke="#2b79c2" strokeWidth="1.6" /><Ln d="M12 2C14 8 18 8 16 14S20 18 19 23H10C12 16 8 12 12 2Z" c="#5aa5e6" f="#7ab8ec" /><Ln d="M1 0H8V8L4.5 12L1 8Z" c="none" f="#d9700f" /><circle cx="21" cy="19" r="3.4" fill="#d9700f" /><circle cx="22" cy="12" r="1.6" fill="#d9700f" /></>,
  <><Ln d="M12 1L22 12L12 23L2 12Z" c="#9b4fb5" f="#fff" w="1.6" /><Ln d="M12 6L17 12L12 18L7 12Z" c="#9b4fb5" /><Ln d="M7 12L12 1M17 12L12 23" c="#9b4fb5" w="1" /></>,
  <><Ln d="M2 3H15L24 12L15 21H2L11 12Z" c="#2b88d8" f="#fff" w="1.5" /><Ln d="M6 17L14 7M10 20L18 10" c="#2b88d8" /></>,
];

/* rail icons */
const ReportRail = () => (
  <Ico s={28}>
    <path d="M5 22H24" stroke="#252423" strokeWidth="1.5" />
    <path d="M7 20V10H10V20ZM12 20V12H15V20ZM17 20V7H20V20Z" stroke="#252423" strokeWidth="1.2" />
  </Ico>
);
const TableRail = () => (
  <Ico s={28}>
    <rect x="4" y="5" width="20" height="18" stroke="#8a8886" strokeWidth="1.4" />
    <rect x="4" y="5" width="20" height="3" fill="#8a8886" />
    <path d="M10.7 5V23M17.3 5V23M4 11H24M4 17H24" stroke="#8a8886" />
  </Ico>
);
const ModelRail = () => (
  <Ico s={28}>
    <rect x="3" y="9" width="11" height="11" stroke="#8a8886" strokeWidth="1.3" />
    <rect x="14" y="3" width="11" height="9" fill={panel} stroke="#8a8886" strokeWidth="1.3" />
    <rect x="14" y="15" width="11" height="10" fill={panel} stroke="#8a8886" strokeWidth="1.3" />
    <path d="M3 13H14M14 7H25M14 19H25" stroke="#8a8886" />
  </Ico>
);
const DaxRail = () => (
  <Ico s={28}>
    <path d="M6 14V3H16L22 9V16" stroke="#8a8886" strokeWidth="1.2" />
    <path d="M16 3V9H22" stroke="#8a8886" strokeWidth="1.2" />
    <text x="2" y="24" fontSize="8.5" fontWeight="600" fontFamily="Open Sans" fill="#8a8886">DAX</text>
    <path d="M23 14C25 18 25 21 22 24" stroke="#8a8886" />
  </Ico>
);

/* charts */
const GreenChart = () => {
  const ys = [[600, 546], [400, 626], [200, 706], [0, 786]];
  const bars = [
    [152, [[695, 785, "#118dff"], [615, 695, "#12239e"], [562, 615, "#e66c37"]]],
    [281, [[719, 785, "#118dff"], [671, 719, "#12239e"], [620, 671, "#e66c37"]]],
    [410, [[726, 785, "#e66c37"]]],
    [539, [[780, 785, "#e66c37"]]],
  ];
  return (
    <svg width="610" height="297" viewBox="92 536 610 297">
      {ys.map(([v, y]) => (
        <g key={v}>
          <path d={`M150 ${y}H643`} stroke="#a4d49c" strokeDasharray="1 3" />
          <ChartText x="143" y={y + 4} textAnchor="end">{v}</ChartText>
        </g>
      ))}
      {[204, 333, 463, 591].map((x, i) => (
        <g key={x}>
          <path d={`M${x} 546V786`} stroke="#a4d49c" strokeDasharray="1 3" />
          <ChartText x={x} y="801" textAnchor="middle">{i}</ChartText>
        </g>
      ))}
      {bars.map(([x, segs]) =>
        segs.map(([a, b, c]) => <rect key={x + "" + a} x={x} y={a} width="104" height={b - a} fill={c} />)
      )}
      <path d="M204 603L333 563L463 687L591.5 774" stroke="#6b007b" strokeWidth="3" fill="none" />
      <ChartText x="652" y="590">10K</ChartText>
      <ChartText x="652" y="690">5K</ChartText>
      <ChartText x="652" y="790">0K</ChartText>
      <ChartText x="397" y="817" textAnchor="middle" $s="12.8" $c="#333">Income Classification</ChartText>
      <ChartText transform="translate(117 665) rotate(-90)" textAnchor="middle" $s="13.2" $c="#333">
        Sum of LIFD, Sum of LDC and Sum of LL...
      </ChartText>
      <ChartText transform="translate(688 666) rotate(-90)" textAnchor="middle" $s="13" $c="#333">Sum of Stunting</ChartText>
    </svg>
  );
};

const OrangeChart = () => {
  const labels = [
    ["CHILE", 852, 452],
    ["CHINA", 899, 453],
    ["BOLIVIA (...", 947, 456],
    ["UNITED R...", 996, 456],
    ["BURKINA ...", 1044, 458],
    ["BANGLAD...", 1092, 456],
    ["AFGHANI...", 1141, 456],
  ];
  return (
    <svg width="396" height="211" viewBox="781 314 396 211">
      {[[200, 323], [100, 383], [0, 442]].map(([v, y]) => (
        <g key={v}>
          <path d={`M837 ${y}H1162`} stroke="#d3c5b8" strokeDasharray="1 3" />
          <ChartText x="828" y={y + 4} textAnchor="end">{v}</ChartText>
        </g>
      ))}
      <path d="M856 340L905 396L953 408L1003 416L1050 426L1098 428L1146 430V442H856Z" fill="#979cb8" />
      <path d="M856 340L905 396L953 408L1003 416L1050 426L1098 428L1146 430" fill="none" stroke="#118dff" strokeWidth="2.6" />
      {labels.map(([t, x, y]) => (
        <ChartText key={t} $ui transform={`translate(${x} ${y}) rotate(-30)`} textAnchor="end" $s="10.8" $b="600" $c="#5f5a58">
          {t}
        </ChartText>
      ))}
      <ChartText x="1001" y="513" textAnchor="middle" $s="10" $c="#333">Country</ChartText>
      <ChartText transform="translate(802 383) rotate(-90)" textAnchor="middle" $s="9.6" $c="#333">Sum of Overweight</ChartText>
    </svg>
  );
};

const ribbon = (x1, x2, t1, b1, t2, b2) => {
  const m = (x1 + x2) / 2;
  return `M${x1} ${t1}C${m} ${t1} ${m} ${t2} ${x2} ${t2}V${b2}C${m} ${b2} ${m} ${b1} ${x1} ${b1}Z`;
};

const PinkChart = () => (
  <svg width="449" height="193" viewBox="728 640 449 193">
    {[["10K", 651], ["5K", 721], ["0K", 790]].map(([v, y]) => (
      <g key={v}>
        <path d={`M783 ${y}H1162`} stroke="#d9a6c8" strokeDasharray="1 3" />
        <ChartText x="776" y={y + 4} textAnchor="end">{v}</ChartText>
      </g>
    ))}
    {[825, 925, 1025, 1125].map((x, i) => (
      <g key={x}>
        <path d={`M${x} 651V790`} stroke="#d9a6c8" strokeDasharray="1 3" />
        <ChartText x={x} y="804" textAnchor="middle">{i}</ChartText>
      </g>
    ))}
    <path d={ribbon(844, 905, 778, 790, 768, 790)} fill="#5298f8" />
    <path d={ribbon(945, 1005, 768, 790, 761, 790)} fill="#5298f8" />
    <path d={ribbon(1045, 1105, 761, 790, 778, 786)} fill="#5298f8" />
    <path d={ribbon(844, 905, 707, 778, 676, 768)} fill="#574bae" />
    <path d={ribbon(945, 1005, 676, 768, 731, 761)} fill="#574bae" />
    <path d={ribbon(1045, 1105, 731, 761, 786, 790)} fill="#574bae" />
    <rect x="805" y="707" width="39" height="71" fill="#12239e" />
    <rect x="805" y="778" width="39" height="12" fill="#118dff" />
    <rect x="905" y="676" width="40" height="92" fill="#12239e" />
    <rect x="905" y="768" width="40" height="22" fill="#118dff" />
    <rect x="1005" y="731" width="40" height="30" fill="#12239e" />
    <rect x="1005" y="761" width="40" height="29" fill="#118dff" />
    <rect x="1105" y="778" width="40" height="8" fill="#118dff" />
    <rect x="1105" y="786" width="40" height="4" fill="#12239e" />
    <ChartText x="975" y="820" textAnchor="middle" $s="10" $c="#333">Income Classification</ChartText>
    <ChartText transform="translate(750 720) rotate(-90)" textAnchor="middle" $s="10" $c="#333">
      Sum of Overweight and Sum of...
    </ChartText>
  </svg>
);

/* taskbar icons */
const WinLogo = () => (
  <Ico s={30}>
    <defs>
      <linearGradient id="wl" x1="0" y1="0" x2="1" y2="1">
        <stop offset="0" stopColor="#3fc5f4" />
        <stop offset="1" stopColor="#0a74d6" />
      </linearGradient>
    </defs>
    <path d="M1 1H14V14H1ZM16 1H29V14H16ZM1 16H14V29H1ZM16 16H29V29H16Z" fill="url(#wl)" />
  </Ico>
);
const TaskView = () => (
  <Ico s={30}>
    <rect x="9" y="1" width="18" height="22" rx="2" fill="#f4f4f4" opacity="0.9" />
    <rect x="3" y="11" width="18" height="18" rx="2" fill="#2b2b2b" />
    <rect x="9" y="11" width="12" height="12" fill="#bdbdbd" opacity="0.7" />
  </Ico>
);
const CopilotTask = () => (
  <svg width="30" height="30" viewBox="0 0 44 42" fill="none">
    <CopilotShape id="cpb" />
  </svg>
);
const Explorer = () => (
  <Ico s={30}>
    <path d="M2 5H12L15 8H28V26H2Z" fill="#f7c325" />
    <rect x="2" y="11" width="26" height="16" fill="#fbd75b" />
    <rect x="10" y="19" width="10" height="4" fill="#2b88d8" />
  </Ico>
);
const Edge = () => (
  <Ico s={30}>
    <defs>
      <linearGradient id="eg" x1="0" y1="0" x2="1" y2="0.6">
        <stop offset="0" stopColor="#0c59a4" />
        <stop offset="0.5" stopColor="#1ba3d6" />
        <stop offset="1" stopColor="#6be26b" />
      </linearGradient>
    </defs>
    <circle cx="15" cy="15" r="14" fill="url(#eg)" />
    <path d="M29 17C27 24 19 25 16 22C14 20 15 17 18 16C22 15 24 15 29 17Z" fill="#d9e8d9" />
    <path d="M15 11C9 12 7 19 11 25C13 28 17 29 20 28C13 28 8 20 15 11Z" fill="#0c59a4" />
  </Ico>
);
const McAfee = () => (
  <Ico s={30}>
    <path d="M3 3L15 9L27 3V21L15 29L3 21Z" fill="#c8242b" />
    <path d="M9 11L15 14L21 11V19L15 23L9 19Z" fill="#eedbd2" />
  </Ico>
);
const Alexa = () => (
  <Ico s={30}>
    <rect x="0" y="0" width="30" height="30" fill="#0a7fd6" />
    <circle cx="15" cy="15" r="9" stroke="#35d2f5" strokeWidth="2.6" />
  </Ico>
);
const Store = () => (
  <Ico s={30}>
    <path d="M10 8V3H20V8" stroke="#35b5d8" strokeWidth="2" />
    <path d="M3 8H27V25A3 3 0 0 1 24 28H6A3 3 0 0 1 3 25Z" fill="#1b3f6f" />
    <rect x="10" y="12" width="4.5" height="4.5" fill="#f25022" />
    <rect x="15.5" y="12" width="4.5" height="4.5" fill="#7fba00" />
    <rect x="10" y="17.5" width="4.5" height="4.5" fill="#00a4ef" />
    <rect x="15.5" y="17.5" width="4.5" height="4.5" fill="#ffb900" />
  </Ico>
);
const Studio = () => (
  <Ico s={30}>
    <circle cx="15" cy="15" r="14" fill="#fff" />
    <path d="M15 3L9 23M15 3L21 23M10 17H20" stroke="#1a5fb4" strokeWidth="1.8" />
    <circle cx="15" cy="8" r="2.4" fill="#1a5fb4" />
  </Ico>
);
const WhatsApp = () => (
  <Ico s={30}>
    <path d="M3 28L5 20A12.5 12.5 0 1 1 10 25Z" fill="#fff" stroke="#1f9d55" strokeWidth="2.4" />
    <path d="M10 9C9 13 13 20 19 21C21 21 22 19 22 18L19 16L17 17C15 16 14 15 13 13L14 11L12 8C11 8 10 8 10 9Z" fill="#1f9d55" />
  </Ico>
);
const Chrome = () => (
  <Ico s={30}>
    <circle cx="15" cy="15" r="14" fill="#34a853" />
    <path d="M15 1A14 14 0 0 1 27 8H15A7 7 0 0 0 8.5 17L3 8A14 14 0 0 1 15 1Z" fill="#ea4335" />
    <path d="M27 8A14 14 0 0 1 15 29L21 18A7 7 0 0 0 15 8Z" fill="#fbbc05" />
    <circle cx="15" cy="15" r="6" fill="#4285f4" stroke="#fff" strokeWidth="1.6" />
  </Ico>
);
const PowerBi = () => (
  <Ico s={30}>
    <rect x="0" y="0" width="30" height="30" fill="#0f6cbd" />
    <rect x="16" y="0" width="14" height="30" fill="#d99a12" />
    <rect x="9" y="8" width="12" height="22" fill="#f2c811" />
    <rect x="3" y="14" width="11" height="16" fill="#f6e27a" />
  </Ico>
);
const Ribbon2 = () => (
  <Ico w={18} h={28}>
    <path d="M9 1C5 1 4 5 5 8L13 27L17 24L10 8" fill="#8661c5" />
    <path d="M9 1C13 1 14 5 13 8L5 27L1 24L8 8Z" fill="#a98be0" />
  </Ico>
);

const fields = [
  ["Column1", 1], ["Country"], ["Income Classific...", 1], ["ISO code"], ["LDC", 1], ["LIFD", 1],
  ["LLDC or SID2", 1], ["Notes"], ["Overweight", 1], ["Report Author"], ["Severe Wasting", 1],
  ["Short Source"], ["Source"], ["Stunting", 1], ["Survey Sample ...", 1], ["U5 Population (...", 1],
  ["Underweight", 1], ["Wasting", 1], ["Year", 1],
];

const App = () => (
  <Page>
    <Global />
    <TitleBar>
      <TitleIcon>
        <Ico s={22}>
          <path d="M2 2H20V20H2Z" stroke="#eee" strokeWidth="1.4" />
          <path d="M6 2V8H16V2M6 20V13H16V20" stroke="#eee" strokeWidth="1.4" />
        </Ico>
      </TitleIcon>
      <TitleIcon>
        <Ico s={22}>
          <path d="M5 3V10H12M5 10L10 5C15 4 18 8 18 12C18 15 15 19 12 21" stroke="#eee" strokeWidth="1.3" />
        </Ico>
      </TitleIcon>
      <TitleIcon>
        <Ico s={22}>
          <path d="M17 3V10H10M17 10L12 5C7 4 4 8 4 12C4 15 7 19 10 21" stroke="#8a8886" strokeWidth="1.3" />
        </Ico>
      </TitleIcon>
      <DocName>report • Last saved: Today at 11:52 am</DocName>
      <Caret />
      <SignIn>Sign in</SignIn>
      <Ico s={26}>
        <circle cx="13" cy="13" r="13" fill="#f3f3f3" />
        <circle cx="13" cy="8" r="3.4" stroke="#333" strokeWidth="1.5" />
        <path d="M6 14H20C20 19 17 21 13 21S6 19 6 14Z" stroke="#333" strokeWidth="1.5" />
      </Ico>
      <WinButton $ml={21}>
        <Ico s={14}>
          <path d="M1 7H13" stroke="#fff" strokeWidth="1.2" />
        </Ico>
      </WinButton>
      <WinButton>
        <Ico s={14}>
          <rect x="1.5" y="1.5" width="11" height="11" rx="1.5" stroke="#fff" strokeWidth="1.2" />
        </Ico>
      </WinButton>
      <WinButton>
        <Ico s={14}>
          <path d="M1 1L13 13M13 1L1 13" stroke="#fff" strokeWidth="1.2" />
        </Ico>
      </WinButton>
    </TitleBar>

    <Ribbon>
      <TabRow>
        <Tab $mr={8}>File</Tab>
        <Tab $active>Home</Tab>
        <Tab $mr={-3}>Insert</Tab>
        <Tab $mr={3}>Modeling</Tab>
        <Tab $mr={1}>View</Tab>
        <Tab>Optimize</Tab>
        <Tab>Help</Tab>
        <ShareButton>
          <Ico s={20}>
            <path d="M8 3H2V18H15V12" stroke="#fff" strokeWidth="1.3" />
            <path d="M6 13C7 8 10 6 13 6V2L19 8L13 13V10C10 10 8 11 6 13Z" stroke="#fff" strokeWidth="1.3" />
          </Ico>
          Share
          <Ico s={10}>
            <path d="M1 3L5 7L9 3" stroke="#fff" strokeWidth="1.3" />
          </Ico>
        </ShareButton>
      </TabRow>
      <Groups>
        <Group $w={201}>
          <Items $pl={13}>
            <Item $w={44} $off>
              <PasteIco />
              <ItemLabel>Paste</ItemLabel>
            </Item>
            <SmallStack>
              <SmallRow><SmallCut />Cut</SmallRow>
              <SmallRow><SmallCopy />Copy</SmallRow>
              <SmallRow><SmallBrush />Format painter</SmallRow>
            </SmallStack>
          </Items>
          <GroupLabel>Clipboard</GroupLabel>
        </Group>
        <Group $w={449}>
          <Items $pl={5}>
            <Item $w={60}><GetDataIco /><ItemLabel>Get<br />data<Chevron /></ItemLabel></Item>
            <Item $w={60}><ExcelIco /><ItemLabel>Excel<br />workbook</ItemLabel></Item>
            <Item $w={78}><OneLakeIco /><ItemLabel>OneLake<br />catalog<Chevron /></ItemLabel></Item>
            <Item $w={40}><SqlIco /><ItemLabel>SQL<br />Server</ItemLabel></Item>
            <Item $w={62}><EnterIco /><ItemLabel>Enter<br />data</ItemLabel></Item>
            <Item $w={56}><DataverseIco /><ItemLabel>Dataverse</ItemLabel></Item>
            <Item $w={82}><RecentIco /><ItemLabel>Recent<br />sources<Chevron /></ItemLabel></Item>
          </Items>
          <GroupLabel>Data</GroupLabel>
        </Group>
        <Group $w={144}>
          <Items $pl={4}>
            <Item $w={80}><TransformIco /><ItemLabel>Transform<br />data<Chevron /></ItemLabel></Item>
            <Item $w={46}><RefreshIco /><ItemLabel>Refresh</ItemLabel></Item>
          </Items>
          <GroupLabel>Queries</GroupLabel>
        </Group>
        <Group $w={183}>
          <Items $pl={4}>
            <Item $w={64}><NewVisualIco /><ItemLabel>New<br />visual</ItemLabel></Item>
            <Item $w={36}><TextBoxIco /><ItemLabel>Text<br />box</ItemLabel></Item>
            <Item $w={72}><MoreVisualsIco /><ItemLabel>More<br />visuals<Chevron /></ItemLabel></Item>
          </Items>
          <GroupLabel>Insert</GroupLabel>
        </Group>
        <Group $w={233}>
          <Items $pl={4}>
            <Item $w={104} $off><CalcVisualIco /><ItemLabel>New visual<br />calculation<Chevron /></ItemLabel></Item>
            <Item $w={48}><MeasureIco /><ItemLabel>New<br />measure</ItemLabel></Item>
            <Item $w={74}><QuickIco /><ItemLabel>Quick<br />measure</ItemLabel></Item>
          </Items>
          <GroupLabel>Calculations</GroupLabel>
        </Group>
        <Group $w={92}>
          <Items $center>
            <Item $w={80} $off><SensitivityIco /><ItemLabel>Sensitivity<br /><Chevron /></ItemLabel></Item>
          </Items>
          <GroupLabel>Sensitivity</GroupLabel>
        </Group>
        <Group $w={74}>
          <Items $center>
            <Item $w={60}><PublishIco /><ItemLabel>Publish</ItemLabel></Item>
          </Items>
          <GroupLabel>Share</GroupLabel>
        </Group>
        <Group $w={73}>
          <Items $center>
            <Item $w={60}><CopilotIco /><ItemLabel>Copilot</ItemLabel></Item>
          </Items>
          <GroupLabel>Copilot</GroupLabel>
        </Group>
        <Collapse>
          <Ico s={12}>
            <path d="M2 8L6 3L10 8" stroke="#252423" strokeWidth="1.5" />
          </Ico>
        </Collapse>
      </Groups>
    </Ribbon>

    <Main>
      <Rail>
        <RailMark />
        <ReportRail />
        <TableRail />
        <ModelRail />
        <DaxRail />
      </Rail>
      <Center>
        <CanvasRow>
          <Canvas>
            <TitleBox>Global&nbsp; Malnutrition Trends 1983-2019</TitleBox>
            <Kpi $x={22} $y={84} $w={192} $h={149} $bg="#e040a5" $line="#3a2a5a" $top={46}>
              <KpiValue>152</KpiValue>
              <KpiLabel $c="#7d3b73">Count of U5 Population...</KpiLabel>
            </Kpi>
            <Kpi $x={235} $y={77} $w={188} $h={156} $bg="#e6e6e6" $line="#3a50b0" $top={48}>
              <KpiValue>343M</KpiValue>
              <KpiLabel $c="#605e5c">Sum of Survey Sample (...</KpiLabel>
            </Kpi>
            <Kpi $x={453} $y={81} $w={173} $h={152} $bg="#b0b0b0" $line="#2f3f4f" $top={47}>
              <KpiValue>14.29K</KpiValue>
              <KpiLabel $c="#555">Sum of Underweight</KpiLabel>
            </Kpi>
            <Visual $x={729} $y={84} $w={398} $h={242} $bg="#f0a585" $line="#d35fa5">
              <Head $h={29} $pl={13}>
                <VisualTitle>Sum of Overweight by Country</VisualTitle>
              </Head>
              <OrangeChart />
            </Visual>
            <Visual $x={40} $y={263} $w={612} $h={371} $bg="#b8f3a8" $line="#37474f">
              <Head $h={72} $pl={13}>
                <VisualTitle>
                  Sum of LIFD, Sum of LDC, Sum of LLDC or SID2 and Sum of Stunting by Income Classification
                </VisualTitle>
                <Legend $mt={10} $gap={5.5} $s={12}>
                  <LegendItem $c="#118dff">Sum of LIFD</LegendItem>
                  <LegendItem $c="#12239e">Sum of LDC</LegendItem>
                  <LegendItem $c="#e66c37">Sum of LLDC or SID2</LegendItem>
                  <LegendItem $c="#6b007b">Sum of Stunting</LegendItem>
                </Legend>
              </Head>
              <GreenChart />
            </Visual>
            <Visual $x={676} $y={369} $w={451} $h={265} $bg="#f2b1da" $line="#a4d8b8">
              <Head $h={70} $pl={13}>
                <VisualTitle>Sum of Overweight and Sum of Underweight by Income Classification</VisualTitle>
                <Legend $mt={8} $gap={4} $s={11.3}>
                  <LegendItem $c="#118dff">Sum of Overweight</LegendItem>
                  <LegendItem $c="#12239e">Sum of Underweight</LegendItem>
                </Legend>
              </Head>
              <PinkChart />
            </Visual>
            <Dotted />
          </Canvas>
          <Filters>
            <PanelHead>
              <Ico s={24}>
                <path d="M2 3H22L14 13V22L10 20V13Z" stroke="#252423" strokeWidth="1.7" />
              </Ico>
              <FiltersHeadIcon $ml={8}>Filters</FiltersHeadIcon>
              <FiltersHeadIcon $ml={90}>
                <Ico w={16} h={14}>
                  <path d="M1 8C3 3 13 3 15 8" stroke="#252423" strokeWidth="1.3" />
                  <circle cx="8" cy="8" r="2.4" stroke="#252423" strokeWidth="1.3" />
                </Ico>
              </FiltersHeadIcon>
              <FiltersHeadIcon $ml={20}>
                <Chevrons />
              </FiltersHeadIcon>
            </PanelHead>
            <SearchBox $w={225} $h={37} $mt={20} $gap={17} $pl={13}>
              <Magnifier flip />
              Search
            </SearchBox>
            <FilterRule />
            <FilterTitle $mt={21}>Filters on this page<span>…</span></FilterTitle>
            <DropBox>Add data fields here</DropBox>
            <FilterTitle $mt={34}>Filters on all pages<span>…</span></FilterTitle>
            <DropBox>Add data fields here</DropBox>
          </Filters>
        </CanvasRow>
        <PageBar>
          <ViewIcon $w={30} $active>
            <Ico s={26}>
              <rect x="2" y="3" width="22" height="16" stroke="#605e5c" strokeWidth="1.3" />
              <path d="M13 19V23M9 23H17" stroke="#605e5c" strokeWidth="1.3" />
            </Ico>
          </ViewIcon>
          <ViewIcon $w={50} $ml={14}>
            <Ico s={26}>
              <rect x="6" y="1" width="14" height="24" rx="1.5" stroke="#605e5c" strokeWidth="1.3" />
              <path d="M13 21V22" stroke="#605e5c" strokeWidth="1.3" />
            </Ico>
          </ViewIcon>
          <NavArrow>
            <Ico w={8} h={12}><path d="M7 1L1 6L7 11Z" fill="#c8c6c4" /></Ico>
          </NavArrow>
          <NavArrow>
            <Ico w={8} h={12}><path d="M1 1L7 6L1 11Z" fill="#c8c6c4" /></Ico>
          </NavArrow>
          <PageTab $w={94} $active>
            Page 1<CloseX>x</CloseX>
          </PageTab>
          <PageTab $w={96}>Page 2</PageTab>
          <AddTab>
            <Ico s={16}>
              <path d="M8 2V14M2 8H14" stroke="#fff" strokeWidth="3" />
            </Ico>
          </AddTab>
        </PageBar>
      </Center>
      <Viz>
        <VizPad>
          <VizHead>
            Visualizations
            <Chevrons />
          </VizHead>
          <BuildLabel>Build visual</BuildLabel>
          <BuildTabs>
            <BuildTab $active>
              <Ico s={34}>
                <path d="M4 3H31" stroke="#333" strokeWidth="1.4" />
                <rect x="4" y="7" width="27" height="10" fill={teal} stroke="#222" strokeDasharray="2 1" />
                <rect x="4" y="21" width="27" height="10" fill={teal} stroke="#222" strokeDasharray="2 1" />
              </Ico>
            </BuildTab>
            <BuildTab>
              <Ico s={34}>
                <path d="M5 31H1V3H15L21 9V18M15 3V9H21" stroke="#333" strokeWidth="1.3" />
                <path d="M31 12L19 23C16 24 15 27 10 30C16 32 21 30 22 26L33 14Z" stroke="#333" strokeWidth="1.3" />
              </Ico>
            </BuildTab>
            <Notch />
          </BuildTabs>
        </VizPad>
        <Gallery>
          {vizIcons.map((icon, i) => (
            <Ico key={i} w={26} h={24}>
              {icon}
            </Ico>
          ))}
        </Gallery>
        <More>...</More>
        <VizRule />
        <WellLabel $mt={11}>Values</WellLabel>
        <Well $mt={6} $h={34} $pl={13}>Add data fields here</Well>
        <WellLabel $mt={15} $b={600}>Drill through</WellLabel>
        <ToggleRow $mt={11}>Cross-report<Toggle>Off</Toggle></ToggleRow>
        <ToggleRow $mt={14}>Keep all filters<Toggle $on>On</Toggle></ToggleRow>
        <Well $mt={14} $h={32} $pl={10}>Add drill-through fields here</Well>
      </Viz>
      <DataPanel>
        <DataHead>
          Data
          <Chevrons />
        </DataHead>
        <DataSearch>
          <SearchBox $w={216} $h={30} $mt={20} $gap={10} $pl={14} $r={4} $c="#6b7a90" $s={16.5}>
            <Magnifier />
            Search
          </SearchBox>
        </DataSearch>
        <Tree>
          <TableRow><TreeChevron /><TableGlyph />country-wise-average</TableRow>
          <TableRow><TreeChevron open /><TableGlyph />malnutrition-estimates</TableRow>
          {fields.map(([name, sum]) => (
            <FieldRow key={name}>
              <Check />
              <Sigma>{sum ? "Σ" : ""}</Sigma>
              {name}
            </FieldRow>
          ))}
        </Tree>
      </DataPanel>
    </Main>

    <StatusBar>
      Page 1 of 2
      <ZoomBar>
        <Ico w={154} h={18}>
          <path d="M2 9H6" stroke="#605e5c" strokeWidth="2" />
          <path d="M11 9H136" stroke="#605e5c" strokeWidth="1.3" />
          <rect x="53" y="1" width="4" height="16" fill="#605e5c" />
          <path d="M73 5V13" stroke="#605e5c" />
          <path d="M143 9H153M148 4V14" stroke="#605e5c" strokeWidth="1.4" />
        </Ico>
        <ZoomPct>73%</ZoomPct>
        <Ico s={20}>
          <rect x="0.5" y="0.5" width="19" height="19" fill="#e8e8e8" stroke="#8a8886" />
          <path d="M4 7V4H7M13 4H16V7M16 13V16H13M7 16H4V13" stroke="#484644" strokeWidth="1.2" />
        </Ico>
      </ZoomBar>
    </StatusBar>

    <Taskbar>
      <Weather>
        <WeatherIcon>
          UV
          <RedBadge>1</RedBadge>
        </WeatherIcon>
        <WeatherText>
          Very high UV
          <Muted>Now</Muted>
        </WeatherText>
      </Weather>
      <WinLogo />
      <TaskSearch>
        <Magnifier c="#222" />
        Search
        <SearchRibbon>
          <Ribbon2 />
        </SearchRibbon>
      </TaskSearch>
      <Slot $ml={2}><TaskView /></Slot>
      <Slot><CopilotTask /></Slot>
      <Slot><Explorer /></Slot>
      <Slot><Edge /></Slot>
      <Slot><McAfee /></Slot>
      <Slot><Alexa /></Slot>
      <Slot><Store /></Slot>
      <Slot><Studio /></Slot>
      <Slot $run>
        <WhatsApp />
        <CountBadge $r={2} $t={1} $bg="#0f6cbd">13</CountBadge>
      </Slot>
      <Slot $run>
        <Chrome />
        <CountBadge $r={2} $t={1} $bg="#0b4a8a">L</CountBadge>
      </Slot>
      <Slot $sel><PowerBi /></Slot>
      <Tray>
        <Ico s={16}>
          <path d="M2 11L8 5L14 11" stroke="#222" strokeWidth="1.5" />
        </Ico>
        <TrayText $align="center" $ml={25}>ENG<br />IN</TrayText>
        <TrayIcon $ml={19}>
          <Ico s={24}>
            <path d="M2 9C8 3 16 3 22 9M5 12C9 8 15 8 19 12M8 15C10 13 14 13 16 15" stroke="#222" strokeWidth="1.4" />
            <circle cx="12" cy="19" r="1.6" fill="#222" />
          </Ico>
        </TrayIcon>
        <TrayIcon>
          <Ico s={24}>
            <path d="M3 9H7L12 4V20L7 15H3Z" stroke="#222" strokeWidth="1.3" />
            <path d="M15 8C17 10 17 14 15 16M18 5C21 9 21 15 18 19" stroke="#222" strokeWidth="1.3" />
          </Ico>
        </TrayIcon>
        <TrayIcon>
          <Ico s={24}>
            <rect x="2" y="6" width="18" height="12" rx="2" stroke="#222" strokeWidth="1.4" />
            <rect x="4.5" y="8.5" width="7" height="7" fill="#222" />
            <path d="M21.5 10V14" stroke="#222" strokeWidth="2" />
          </Ico>
        </TrayIcon>
        <TrayText $align="right" $ml={12} $s={15}>11:58<br />26-03-2025</TrayText>
      </Tray>
    </Taskbar>
  </Page>
);

export default App;
